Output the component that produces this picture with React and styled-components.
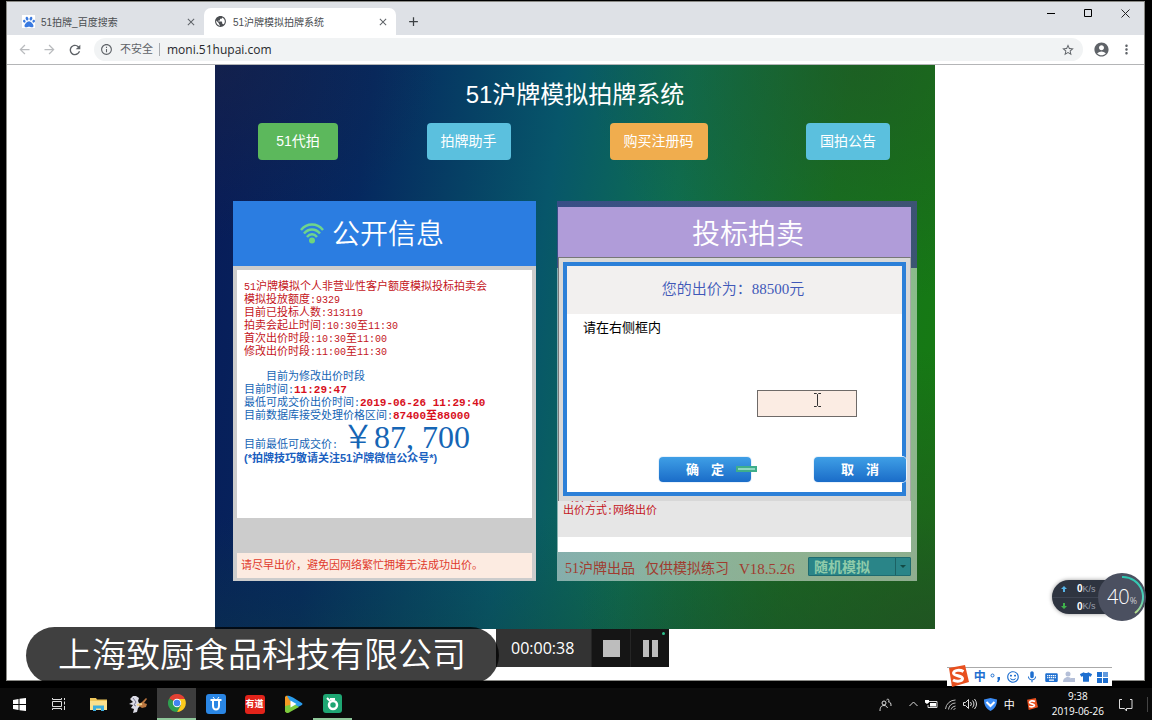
import { useState } from 'react';
import styled, { createGlobalStyle } from 'styled-components';
import {
  MdAccountCircle,
  MdAdd,
  MdArrowBack,
  MdArrowForward,
  MdClose,
  MdInfoOutline,
  MdKeyboard,
  MdMic,
  MdMoreVert,
  MdPublic,
  MdRefresh,
  MdSentimentSatisfiedAlt,
  MdStarBorder,
} from 'react-icons/md';
import { FaPaw, FaTshirt } from 'react-icons/fa';

const GlobalStyle = createGlobalStyle`
  * {
    box-sizing: border-box;
  }
  body {
    margin: 0;
    background-color: #000;
    font-family: 'Liberation Sans', 'Noto Sans CJK SC', sans-serif;
  }
  h1, h2, p {
    margin: 0;
    font-weight: 400;
  }
  button {
    border: none;
    padding: 0;
    background: none;
    font-family: inherit;
    cursor: pointer;
  }
`;

export default function App() {
  return (
    <StDesktop>
      <GlobalStyle />
      <StWindow>
        <TabStrip />
        <AddressBar />
        <StPage>
          <AuctionSystem />
        </StPage>
      </StWindow>
      <Taskbar />
      <Recorder />
      <StCompany>上海致厨食品科技有限公司</StCompany>
      <SpeedMeter />
      <InputMethodBar />
    </StDesktop>
  );
}

function TabStrip() {
  return (
    <StTabStrip>
      <StTab>
        <StFavicon>
          <FaPaw size={12} color="#3a7ae0" />
        </StFavicon>
        <span>51拍牌_百度搜索</span>
        <button type="button" aria-label="关闭标签页">
          <MdClose size={12} />
        </button>
      </StTab>
      <StTab $active>
        <MdPublic size={13} />
        <span>51沪牌模拟拍牌系统</span>
        <button type="button" aria-label="关闭标签页">
          <MdClose size={12} />
        </button>
      </StTab>
      <StNewTab type="button" aria-label="新标签页">
        <MdAdd size={15} />
      </StNewTab>
      <StWindowControls>
        <button type="button" aria-label="最小化">
          <svg width="9" height="9">
            <path d="M0 4.5h8" stroke="#000" />
          </svg>
        </button>
        <button type="button" aria-label="最大化">
          <svg width="9" height="9">
            <path d="M.5 .5h7v7h-7z" stroke="#000" fill="none" />
          </svg>
        </button>
        <button type="button" aria-label="关闭">
          <svg width="9" height="9">
            <path d="M.5 .5l8 8M8.500 .5l-8 8" stroke="#222" />
          </svg>
        </button>
      </StWindowControls>
    </StTabStrip>
  );
}

function AddressBar() {
  const [url, setUrl] = useState('moni.51hupai.com');

  return (
    <StToolbar>
      <StToolButton type="button" aria-label="后退" $muted>
        <MdArrowBack size={15} />
      </StToolButton>
      <StToolButton type="button" aria-label="前进" $muted>
        <MdArrowForward size={15} />
      </StToolButton>
      <StToolButton type="button" aria-label="重新加载">
        <MdRefresh size={16} />
      </StToolButton>
      <StAddress>
        <MdInfoOutline size={13} />
        <span>不安全</span>
        <input aria-label="网址" value={url} onChange={(e) => setUrl(e.target.value)} />
        <MdStarBorder size={14} />
      </StAddress>
      <StToolButton type="button" aria-label="账户">
        <MdAccountCircle size={17} />
      </StToolButton>
      <StToolButton type="button" aria-label="更多">
        <MdMoreVert size={15} />
      </StToolButton>
    </StToolbar>
  );
}

function AuctionSystem() {
  return (
    <StAuction>
      <h1>51沪牌模拟拍牌系统</h1>
      <StLinks>
        <StLinkButton type="button" $color="#5cb85c" $wide>
          51代拍
        </StLinkButton>
        <StLinkButton type="button" $color="#5bc0de">
          拍牌助手
        </StLinkButton>
        <StLinkButton type="button" $color="#f0ad4e">
          购买注册码
        </StLinkButton>
        <StLinkButton type="button" $color="#5bc0de">
          国拍公告
        </StLinkButton>
      </StLinks>
      <StPanels>
        <InfoPanel />
        <BidPanel />
      </StPanels>
    </StAuction>
  );
}

function InfoPanel() {
  return (
    <StInfoPanel>
      <StInfoHeader>
        <svg width="24" height="21" viewBox="0 0 24 21" fill="none" stroke="#6fd58c" strokeWidth="2.500">
          <path d="M1 7C7-.2 17-.2 23 7M4 10.500c4.500-5.300 11.500-5.300 16 0M7 14c3-3.700 7-3.700 10 0" />
          <circle cx="12" cy="17.500" r="3" fill="#6fd57c" stroke="none" />
        </svg>
        <h2>公开信息</h2>
      </StInfoHeader>
      <StInfoBody>
        <StInfoText>
          <StLine>
            <StNum>51</StNum>沪牌模拟个人非营业性客户额度模拟投标拍卖会
          </StLine>
          <StLine>
            模拟投放额度<StNum>:9329</StNum>
          </StLine>
          <StLine>
            目前已投标人数<StNum>:313119</StNum>
          </StLine>
          <StLine>
            拍卖会起止时间<StNum>:10:30</StNum>至<StNum>11:30</StNum>
          </StLine>
          <StLine>
            首次出价时段<StNum>:10:30</StNum>至<StNum>11:00</StNum>
          </StLine>
          <StLine>
            修改出价时段<StNum>:11:00</StNum>至<StNum>11:30</StNum>
          </StLine>
          <StStatus>
            <StLine $blue $indent>
              目前为修改出价时段
            </StLine>
            <StLine $blue>
              目前时间<StNum>:</StNum>
              <strong>11:29:47</strong>
            </StLine>
            <StLine $blue>
              最低可成交价出价时间<StNum>:</StNum>
              <strong>2019-06-26 11:29:40</strong>
            </StLine>
            <StLine $blue>
              目前数据库接受处理价格区间<StNum>:</StNum>
              <strong>87400至88000</strong>
            </StLine>
            <StPriceLine>
              目前最低可成交价<StNum>:</StNum>
              <StPrice>￥87, 700</StPrice>
            </StPriceLine>
            <StTip>(*拍牌技巧敬请关注51沪牌微信公众号*)</StTip>
          </StStatus>
        </StInfoText>
        <StNotice>请尽早出价，避免因网络繁忙拥堵无法成功出价。</StNotice>
      </StInfoBody>
    </StInfoPanel>
  );
}

function BidPanel() {
  const [code, setCode] = useState('');
  const [mode, setMode] = useState('随机模拟');

  return (
    <StBidPanel>
      <StBidHeader>
        <h2>投标拍卖</h2>
      </StBidHeader>
      <StDialog>
        <StDialogFrame>
          <StDialogTitle>您的出价为：88500元</StDialogTitle>
          <StDialogLabel htmlFor="code">请在右侧框内</StDialogLabel>
          <StCodeRow>
            <input id="code" type="text" value={code} onChange={(e) => setCode(e.target.value)} />
            <StCaret width="7" height="14" viewBox="0 0 7 14">
              <path d="M0 .5h2.500l1 1 1-1H7M0 13.500h2.500l1-1 1 1H7M3.500 1.500v11" stroke="#333" fill="none" />
            </StCaret>
          </StCodeRow>
          <StDialogButtons>
            <StDialogButton type="button">
              <span>确</span>
              <span>定</span>
            </StDialogButton>
            <StProgress />
            <StDialogButton type="button">
              <span>取</span>
              <span>消</span>
            </StDialogButton>
          </StDialogButtons>
        </StDialogFrame>
      </StDialog>
      <StBidInfo>
        <StHiddenLine>出价时间</StHiddenLine>
        出价方式<StNum>:</StNum>网络出价
      </StBidInfo>
      <StBidSpace />
      <StBidFooter>
        <StVersion>
          <span>51沪牌出品</span>
          <span>仅供模拟练习</span>
          <StRelease>V18.5.26</StRelease>
        </StVersion>
        <StSelect>
          <select aria-label="模拟方式" value={mode} onChange={(e) => setMode(e.target.value)}>
            <option>随机模拟</option>
          </select>
          <svg width="15" height="17" viewBox="0 0 15 17">
            <path d="M.5 0v17" stroke="#1c6264" />
            <path d="M5 7h6l-3 3z" fill="#134a45" />
          </svg>
        </StSelect>
      </StBidFooter>
    </StBidPanel>
  );
}

function Recorder() {
  return (
    <StRecorder>
      <time>00:00:38</time>
      <button type="button" aria-label="停止">
        <svg width="17" height="17">
          <path d="M0 0h17v17H0z" fill="#bdbdbd" />
        </svg>
      </button>
      <button type="button" aria-label="暂停">
        <svg width="17" height="17">
          <path d="M1 0h6v17H1zM10 0h6v17h-6z" fill="#bdbdbd" />
        </svg>
        <StRecordDot />
      </button>
    </StRecorder>
  );
}

function SpeedMeter() {
  return (
    <StMeter>
      <StSpeeds>
        <StSpeed>
          <svg width="6" height="6" viewBox="0 0 6 6">
            <path d="M3 0l3 3H4v3H2V3H0z" fill="#56b4e8" />
          </svg>
          <b>0</b>K/s
        </StSpeed>
        <StSpeed>
          <svg width="6" height="6" viewBox="0 0 6 6">
            <path d="M3 6L0 3h2V0h2v3h2z" fill="#3fb34a" />
          </svg>
          <b>0</b>K/s
        </StSpeed>
      </StSpeeds>
      <StGauge>
        <svg width="48" height="48" viewBox="0 0 48 48">
          <defs>
            <linearGradient id="arc" x1="0" y1="0" x2="0" y2="1">
              <stop offset="0" stopColor="#2cc6b0" />
              <stop offset="0.6" stopColor="#4fd0b8" />
              <stop offset="1" stopColor="#b8dc8c" />
            </linearGradient>
          </defs>
          <path d="M24 4a20 20 0 0 1 13 36" fill="none" stroke="url(#arc)" strokeWidth="2" />
        </svg>
        <span>40</span>
        <small>%</small>
      </StGauge>
    </StMeter>
  );
}

function SogouLogo({ size }) {
  return (
    <svg width={size} height={size} viewBox="0 0 22 22">
      <path d="M2 3L18 0l4 17-17 5z" fill="#e8501f" />
      <path
        d="M16.500 6.500C13 4.500 7 5 6.500 8c-.4 3 9 2.500 9 5.500 0 3-6 3.500-9.500 1.500"
        fill="none"
        stroke="#fff"
        strokeWidth="3"
      />
    </svg>
  );
}

function InputMethodBar() {
  return (
    <StIme>
      <StImeLogo>
        <SogouLogo size={22} />
      </StImeLogo>
      <b>中</b>
      <svg width="11" height="11" viewBox="0 0 11 11">
        <circle cx="2.500" cy="3.500" r="1.500" fill="none" stroke="#1e6fd0" />
        <path d="M7.500 5h2.500v2.500L8.500 10H7l1-2.500h-.5z" fill="#1e6fd0" />
      </svg>
      <MdSentimentSatisfiedAlt size={14} />
      <MdMic size={14} />
      <MdKeyboard size={15} />
      <svg width="12" height="12" viewBox="0 0 12 12" fill="#b4bfd8">
        <circle cx="5" cy="3" r="2.500" />
        <path d="M0 11c0-6 8-6 8-3v3z" />
        <path d="M8 7h4v4H8z" />
      </svg>
      <FaTshirt size={12} />
      <svg width="11" height="11" viewBox="0 0 11 11" fill="#1e6fd0">
        <path d="M0 0h5v5H0zM0 6h5v5H0zM6 6h5v5H6z" />
        <path d="M6 0h5v5H6z" opacity=".7" />
      </svg>
    </StIme>
  );
}

function Taskbar() {
  return (
    <StTaskbar>
      <StTask type="button" aria-label="开始">
        <svg width="13" height="13" viewBox="0 0 13 13" fill="#fff">
          <path d="M0 2l5.500-1v5H0zM6.500 .8L13 0v6H6.500zM0 7h5.500v5L0 11zM6.500 7H13v6l-6.500-.8z" />
        </svg>
      </StTask>
      <StTask type="button" aria-label="任务视图">
        <svg width="14" height="12" viewBox="0 0 14 12" fill="none" stroke="#ddd">
          <path d="M.5 0v1.500h9V0M.5 12v-1.500h9V12M.5 3.500h9v5h-9zM12.500 0v2M12.500 3.500v3M12.500 8v4" />
        </svg>
      </StTask>
      <StTask type="button" aria-label="文件资源管理器">
        <svg width="17" height="14" viewBox="0 0 17 14">
          <path d="M0 1h6l1 1.500h10V13H0z" fill="#f0c75c" />
          <path d="M0 4h17v9H0z" fill="#fbe08d" />
          <path d="M3 14V8.500h11V14h-3v-2.500H6V14z" fill="#3eaede" />
        </svg>
      </StTask>
      <StTask type="button" aria-label="白马">
        <svg width="18" height="18" viewBox="0 0 18 18">
          <path d="M4 1l3 0 3 2-1 3 1 2 2 2-3 3-1 4-4 1 1-4-3-1 2-3-4-1 4-2-3-3z" fill="#dcdce6" />
          <path d="M4 3l3 4-2 3 2 1" fill="none" stroke="#777890" />
          <path d="M10 9l3-2 4-4 1 1-3 4 3 1-1 3-4 1-3-2z" fill="#bb7740" />
          <path d="M8 10l5-1" stroke="#f0d08a" strokeWidth="2" />
        </svg>
      </StTask>
      <StTask type="button" aria-label="浏览器" $active $running>
        <svg width="18" height="18" viewBox="0 0 18 18">
          <path d="M9 9L1.200 4.500a9 9 0 0 1 15.600 0z" fill="#e34133" />
          <path d="M9 9L1.200 4.500A9 9 0 0 0 9 18l4-6.500z" fill="#2f9e4f" />
          <path d="M9 5h7.900A9 9 0 0 1 9 18l4-7z" fill="#fbc91c" />
          <circle cx="9" cy="9" r="4.200" fill="#fff" />
          <circle cx="9" cy="9" r="3.300" fill="#4284f0" />
        </svg>
      </StTask>
      <StTask type="button" aria-label="手机助手">
        <svg width="20" height="20" viewBox="0 0 20 20">
          <rect width="20" height="20" rx="3" fill="#2a86e4" />
          <path d="M4.500 6h11M7 7v5a3 3.500 0 0 0 6 0V7" fill="none" stroke="#fff" strokeWidth="2" />
          <path d="M7 3l1.500 2M13 3l-1.500 2" stroke="#fff" />
        </svg>
      </StTask>
      <StTask type="button" aria-label="有道">
        <StYoudao>有道</StYoudao>
      </StTask>
      <StTask type="button" aria-label="播放器">
        <svg width="19" height="18" viewBox="0 0 19 18">
          <path d="M1 2c1-2 3-1.500 5 0l4 7-4 7c-2 1.500-4 2-5 0z" fill="#f59a23" />
          <path d="M3 1c2-1 4 .5 6 1.500l8 5c2 1 2 2 0 3l-6 3z" fill="#2a9cec" />
          <path d="M1 16V11l9-2 5 3-9 5c-2 1.500-4 1.500-5-1z" fill="#7ccb3e" />
          <path d="M6.500 5.500l6 3.500-6 3.500z" fill="#fff" />
        </svg>
      </StTask>
      <StTask type="button" aria-label="录屏" $running>
        <svg width="19" height="19" viewBox="0 0 19 19">
          <rect width="19" height="19" rx="3" fill="#1ea673" />
          <circle cx="10" cy="11" r="4" fill="none" stroke="#fff" strokeWidth="2.500" />
          <path d="M4 4l3 3M7 5h5" stroke="#fff" strokeWidth="2" />
        </svg>
      </StTask>
      <StTray>
        <svg width="13" height="13" viewBox="0 0 13 13" fill="none" stroke="#ddd">
          <circle cx="5" cy="5" r="2" />
          <path d="M1 13c0-4 1.500-5.500 4-5.500S8 9 8.500 10M7.500 2c2-2 3 0 2 2 2 0 2.500 1 2.500 4" />
        </svg>
        <svg width="9" height="6" viewBox="0 0 9 6" fill="none" stroke="#ddd">
          <path d="M.5 5L4.500 1l4 4" />
        </svg>
        <svg width="13" height="10" viewBox="0 0 13 10">
          <path d="M4 2.500h8v6H3V6" fill="none" stroke="#ddd" />
          <path d="M5 4h6v3.500H5zM0 1h4v2.500L2 5 0 3.500z" fill="#fff" />
        </svg>
        <svg width="11" height="11" viewBox="0 0 11 11" fill="none" stroke="#bbb">
          <path d="M.5 10A10 10 0 0 1 10.500 1M3.500 10.500a7 7 0 0 1 7-6.500M6 10.500A5 5 0 0 1 10.500 7M8.500 10.500l2-1" />
        </svg>
        <svg width="14" height="12" viewBox="0 0 14 12" fill="none" stroke="#ddd">
          <path d="M.5 4.500h2l3-3v9l-3-3h-2zM7.500 4a3 3 0 0 1 0 4M9.500 2.500a5 5 0 0 1 0 7M11.500 1a8 8 0 0 1 0 10" />
        </svg>
        <svg width="13" height="13" viewBox="0 0 13 13">
          <path d="M0 1.500L6.500 0 13 1.500c0 6-2 9-6.500 11.500C2 10.500 0 7.500 0 1.500z" fill="#3b8cf5" />
          <path d="M2.500 4L6.500 8l4-4" fill="none" stroke="#fff" strokeWidth="2" />
        </svg>
        <span>中</span>
        <SogouLogo size={12} />
      </StTray>
      <StClock>
        <span>9:38</span>
        <span>2019-06-26</span>
      </StClock>
      <StNotify type="button" aria-label="通知">
        <svg width="14" height="13" viewBox="0 0 14 13" fill="none" stroke="#ddd">
          <path d="M3 .5H.5v9h5l2 2.500V9.500h5.500v-9H11" />
        </svg>
      </StNotify>
    </StTaskbar>
  );
}

const StDesktop = styled.div`
  position: relative;
  display: flex;
  flex-direction: column;
  min-height: 100vh;
  background-color: #000;
`;

const StWindow = styled.main`
  flex: 1;
  display: flex;
  flex-direction: column;
  margin: 1px 7px 7px 6px;
  border: 1px solid #8a8a86;
  background-color: #fff;
`;

const StTabStrip = styled.div`
  display: flex;
  align-items: flex-end;
  height: 33px;
  padding-left: 5px;
  background-color: #dee1e6;
`;

const StTab = styled.div`
  display: flex;
  align-items: center;
  gap: 6px;
  width: 192px;
  height: 27px;
  padding: 0 7px 0 10px;
  border-radius: 7px 7px 0 0;
  background-color: ${(props) => (props.$active ? '#fff' : 'transparent')};
  color: #4a4d51;
  font-size: 10px;

  & > span {
    flex: 1;
    white-space: nowrap;
  }
  & > button {
    display: flex;
    color: #5f6368;
  }
`;

const StFavicon = styled.div`
  display: flex;
  align-items: center;
  justify-content: center;
  width: 13px;
  height: 13px;
  background-color: #fff;
`;

const StNewTab = styled.button`
  display: flex;
  align-items: center;
  justify-content: center;
  width: 34px;
  height: 27px;
  color: #3c4043;
`;

const StWindowControls = styled.div`
  display: flex;
  align-self: flex-start;
  margin-left: auto;

  & > button {
    display: flex;
    align-items: center;
    justify-content: center;
    width: 37px;
    height: 23px;
  }
`;

const StToolbar = styled.div`
  display: flex;
  align-items: center;
  height: 30px;
  padding: 0 5px;
  border-bottom: 1px solid #b4b5b7;
`;

const StToolButton = styled.button`
  display: flex;
  align-items: center;
  justify-content: center;
  width: 25px;
  height: 25px;
  color: ${(props) => (props.$muted ? '#b9bbbe' : '#5f6368')};
`;

const StAddress = styled.div`
  flex: 1;
  display: flex;
  align-items: center;
  gap: 7px;
  height: 23px;
  margin: 0 6px 0 7px;
  padding: 0 8px 0 6px;
  border-radius: 12px;
  background-color: #f1f3f4;
  color: #5f6368;
  font-size: 11px;

  & > span {
    padding-right: 6px;
    border-right: 1px solid #a9acb0;
    line-height: 13px;
  }
  & > input {
    flex: 1;
    min-width: 0;
    padding: 0;
    border: none;
    outline: none;
    background: none;
    color: #27292c;
    font-family: 'Open Sans', 'Noto Sans', sans-serif;
    font-size: 12px;
  }
`;

const StPage = styled.div`
  flex: 1;
  padding-right: 1px;
`;

const StAuction = styled.div`
  max-width: 720px;
  margin: 0 auto;
  padding: 16px 18px 48px;
  background: radial-gradient(ellipse at 0% 0%, rgba(35, 40, 60, 0.4), transparent 22%),
    radial-gradient(ellipse at 90% 0%, rgba(35, 75, 40, 0.5), transparent 30%),
    radial-gradient(ellipse at 100% 100%, rgba(35, 80, 35, 0.8), transparent 35%),
    linear-gradient(transparent 80%, rgba(15, 65, 60, 0.3) 100%),
    linear-gradient(98deg, #081b58 0%, #05285f 20%, #07566a 44%, #0e6e50 60%, #16741f 80%, #167b10 100%);

  & > h1 {
    color: #fff;
    font-size: 24px;
    line-height: 28px;
    text-align: center;
  }
`;

const StLinks = styled.nav`
  display: grid;
  grid-template-columns: 166fr 175fr 205fr 174fr;
  justify-items: center;
  margin: 14px -18px 41px;
`;

const StLinkButton = styled.button`
  height: 37px;
  padding: 0 ${(props) => (props.$wide ? '18px' : '14px')} 3px;
  border-radius: 4px;
  background-color: ${(props) => props.$color};
  color: #fff;
  font-size: 14px;
`;

const StPanels = styled.div`
  display: grid;
  grid-template-columns: 303fr 360fr;
  gap: 21px;
`;

const StInfoPanel = styled.section`
  display: flex;
  flex-direction: column;
`;

const StInfoHeader = styled.header`
  display: flex;
  align-items: center;
  justify-content: center;
  gap: 8px;
  height: 65px;
  padding-right: 25px;
  background-color: #2b7de1;

  & > h2 {
    padding-top: 3px;
    color: #fff;
    font-size: 28px;
    font-weight: 350;
    line-height: 40px;
  }
`;

const StInfoBody = styled.div`
  flex: 1;
  display: flex;
  flex-direction: column;
  justify-content: space-between;
  padding: 4px 4px 3px;
  background-color: #ccc;
`;

const StInfoText = styled.div`
  min-height: 248px;
  padding: 10px 7px;
  background-color: #fff;
`;

const StLine = styled.p`
  height: 13px;
  padding-left: ${(props) => (props.$indent ? '22px' : '0')};
  color: ${(props) => (props.$blue ? '#1565b5' : '#c4161c')};
  font-size: 11px;
  line-height: 13px;
  white-space: nowrap;

  & > strong {
    color: #d8101c;
    font-family: 'Liberation Mono', 'Noto Sans CJK SC', monospace;
  }
`;

const StNum = styled.span`
  font-family: 'Liberation Mono', monospace;
  font-size: 10px;
`;

const StStatus = styled.div`
  margin-top: 12px;
`;

const StPriceLine = styled.p`
  height: 30px;
  color: #1565b5;
  font-size: 11px;
  line-height: 30px;
  white-space: nowrap;
`;

const StPrice = styled.span`
  margin-left: 4px;
  font-family: 'Liberation Serif', 'Noto Sans CJK SC', serif;
  font-size: 32px;
  font-weight: 350;
`;

const StTip = styled.p`
  color: #1a5fc0;
  font-size: 11px;
  font-weight: 700;
  line-height: 13px;
`;

const StNotice = styled.p`
  height: 25px;
  padding: 0 4px;
  background-color: #fcebe1;
  color: #e03a2c;
  font-size: 11px;
  line-height: 25px;
`;

const StBidPanel = styled.section`
  display: flex;
  flex-direction: column;
  padding: 6px 6px 0 1px;
  background: linear-gradient(rgba(72, 74, 145, 0.75) 67px, rgba(255, 255, 255, 0.5) 67px);
`;

const StBidHeader = styled.header`
  display: flex;
  align-items: center;
  justify-content: center;
  padding: 8px 26px 2px 53px;
  background-color: #b09cd9;

  & > h2 {
    color: #fff;
    font-size: 28px;
    font-weight: 350;
    line-height: 40px;
  }
`;

const StDialog = styled.div`
  padding: 4px 4px 5px;
  border: 1px solid #777;
  border-bottom: none;
  border-right-color: #aaa;
  background-color: #d8d8d8;
`;

const StDialogFrame = styled.form`
  display: flex;
  flex-direction: column;
  border: 4px solid #2c80d8;
  background-color: #fff;
`;

const StDialogTitle = styled.div`
  padding: 1px 3px 3px 0;
  background-color: #f2f0ef;
  color: #4058b8;
  font-family: 'Liberation Serif', 'Noto Sans CJK SC', serif;
  font-size: 15px;
  font-weight: 350;
  line-height: 44px;
  text-align: center;
`;

const StDialogLabel = styled.label`
  padding: 5px 16px;
  color: #000;
  font-size: 13px;
  line-height: 18px;
`;

const StCodeRow = styled.div`
  position: relative;
  align-self: flex-end;
  margin: 48px 45px 40px 0;

  & > input {
    display: block;
    width: 100px;
    height: 27px;
    padding: 0 6px;
    border: 1px solid #6e6a68;
    outline: none;
    background-color: #fbece3;
  }
`;

const StCaret = styled.svg`
  position: absolute;
  top: 3px;
  left: 57px;
`;

const StDialogButtons = styled.div`
  position: relative;
  display: flex;
  justify-content: flex-end;
  gap: 63px;
  margin: 0 -4px 10px 0;
`;

const StDialogButton = styled.button`
  display: flex;
  align-items: center;
  justify-content: center;
  gap: 12px;
  width: 92px;
  height: 25px;
  padding-bottom: 2px;
  border-radius: 4px;
  background: linear-gradient(#3f9fe6, #1a6cc8);
  box-shadow: 0 0 0 1px #e8f2fc;
  color: #fff;
  font-size: 13px;
  font-weight: 700;
`;

/* transfer marker that sits over the confirm button's edge */
const StProgress = styled.i`
  position: absolute;
  top: 9px;
  right: 149px;
  width: 21px;
  height: 6px;
  border: 2px solid #3fae8a;
  background-color: #8fd8c0;
`;

const StBidInfo = styled.div`
  height: 36px;
  padding: 0 5px;
  background-color: #e6e6e6;
  color: #c4161c;
  font-size: 11px;
  line-height: 13px;
`;

/* mostly covered by the dialog, only the feet of the text show */
const StHiddenLine = styled.p`
  display: flex;
  align-items: flex-end;
  height: 3px;
  overflow: hidden;
`;

const StBidSpace = styled.div`
  height: 15px;
  background-color: #fff;
`;

const StBidFooter = styled.footer`
  display: flex;
  align-items: center;
  justify-content: space-between;
  height: 29px;
  padding-left: 7px;
`;

const StVersion = styled.div`
  display: flex;
  gap: 10px;
  padding-top: 4px;
  color: #a03c30;
  font-family: 'Liberation Serif', 'Noto Sans CJK SC', serif;
  font-size: 14px;
  line-height: 20px;
  white-space: nowrap;
`;

const StRelease = styled.span`
  font-size: 15px;
`;

const StSelect = styled.div`
  position: relative;

  & > select {
    display: block;
    appearance: none;
    width: 103px;
    height: 19px;
    padding: 1px 5px 0;
    border: 1px solid #1f6b70;
    border-radius: 1px;
    background-color: #2a8588;
    color: #8fcbaa;
    font-family: inherit;
    font-size: 14px;
    font-weight: 700;
    line-height: 17px;
  }
  & > svg {
    position: absolute;
    top: 1px;
    right: 1px;
    pointer-events: none;
  }
`;

const StRecorder = styled.div`
  position: absolute;
  bottom: 53px;
  left: 496px;
  display: flex;
  height: 38px;
  background-color: #333;

  & > time {
    padding: 0 17px 0 15px;
    color: #fff;
    font-family: 'Open Sans', 'Noto Sans', sans-serif;
    font-size: 16px;
    line-height: 38px;
  }
  & > button {
    position: relative;
    display: flex;
    align-items: center;
    justify-content: center;
    width: 39px;
    border-left: 1px solid #252525;
    background-color: #151515;
  }
`;

const StRecordDot = styled.i`
  position: absolute;
  top: 3px;
  right: 4px;
  width: 3px;
  height: 3px;
  border-radius: 50%;
  background-color: #2cc08c;
`;

const StCompany = styled.div`
  position: absolute;
  bottom: 36px;
  left: 26px;
  padding: 0 33px 0 32px;
  border-radius: 29px;
  background-color: rgba(0, 0, 0, 0.75);
  color: #fff;
  font-size: 34px;
  font-weight: 350;
  line-height: 57px;
`;

const StMeter = styled.div`
  position: absolute;
  right: 6px;
  bottom: 99px;
  display: flex;
  align-items: center;
`;

const StSpeeds = styled.div`
  display: flex;
  flex-direction: column;
  width: 70px;
  height: 34px;
  margin-right: -24px;
  border-radius: 17px 0 0 17px;
  background-color: #2e3440;
  box-shadow: 0 0 4px rgba(0, 0, 0, 0.4);
`;

const StSpeed = styled.div`
  display: flex;
  align-items: center;
  height: 17px;
  padding-left: 9px;
  color: #9a9fac;
  font-size: 9px;

  & > b {
    margin-left: 10px;
    color: #fff;
    font-size: 10px;
  }
  & + & {
    border-top: 1px solid #3e4452;
  }
`;

const StGauge = styled.div`
  position: relative;
  display: flex;
  align-items: baseline;
  justify-content: center;
  width: 48px;
  height: 48px;
  border-radius: 50%;
  background-color: #4b5060;
  color: #fff;
  font-family: 'Open Sans', 'Noto Sans', sans-serif;
  font-weight: 300;
  line-height: 47px;

  & > svg {
    position: absolute;
    inset: 0;
  }
  & > span {
    font-size: 20px;
  }
  & > small {
    font-size: 9px;
  }
`;

const StIme = styled.div`
  position: absolute;
  right: 40px;
  bottom: 34px;
  display: flex;
  align-items: center;
  justify-content: space-between;
  width: 165px;
  height: 19px;
  padding-right: 4px;
  border-top: 1px solid #aaa;
  background-color: #fff;
  color: #1e6fd0;

  & > b {
    font-size: 12px;
    line-height: 18px;
  }
`;

const StImeLogo = styled.div`
  display: flex;
  margin-top: -3px;
`;

const StTaskbar = styled.footer`
  display: flex;
  align-items: center;
  height: 32px;
  background-color: #0b0b0b;
`;

const StTask = styled.button`
  display: flex;
  align-items: center;
  justify-content: center;
  width: 39px;
  height: 32px;
  border-bottom: ${(props) => (props.$running ? '2px solid #8fc79a' : 'none')};
  background-color: ${(props) => (props.$active ? '#3d3d3d' : 'transparent')};

  &:nth-child(2) {
    margin-right: 1px;
  }
`;

const StYoudao = styled.span`
  width: 20px;
  border-radius: 3px;
  background-color: #e2231a;
  color: #fff;
  font-size: 9px;
  font-weight: 700;
  line-height: 19px;
`;

const StTray = styled.div`
  display: flex;
  align-items: center;
  gap: 7px;
  margin-left: auto;
  color: #fff;
  font-size: 11px;

  & > svg:first-child {
    margin-right: 10px;
  }
  & > svg:last-child {
    margin-left: 4px;
  }
`;

const StClock = styled.div`
  display: flex;
  flex-direction: column;
  align-items: center;
  margin-left: 14px;
  color: #fff;
  font-family: 'Open Sans', 'Noto Sans', sans-serif;
  font-size: 10px;
  line-height: 15px;
`;

const StNotify = styled.button`
  display: flex;
  justify-content: center;
  width: 44px;
  padding-top: 2px;
  margin-right: 4px;
  border-right: 1px solid #444;
`;
